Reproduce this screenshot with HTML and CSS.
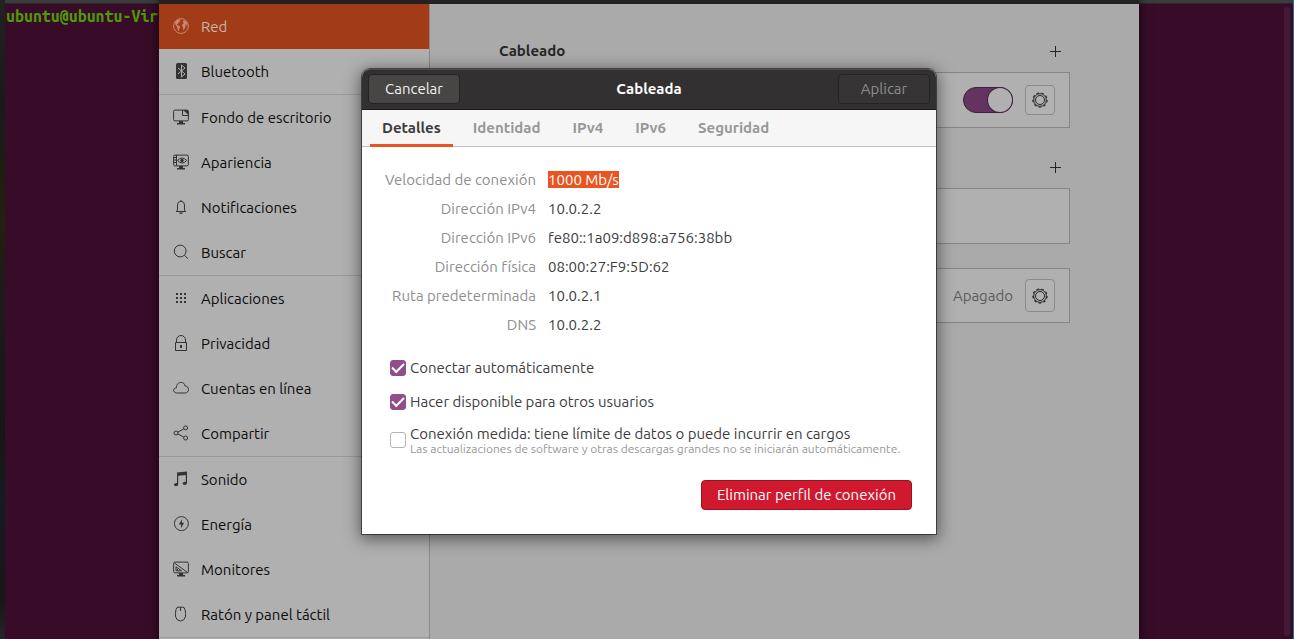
FILE: index.html
```html
<!DOCTYPE html>
<html lang="es">
<head>
<meta charset="utf-8">
<meta name="viewport" content="width=device-width, initial-scale=1">
<title>Configuración de red</title>
<link rel="stylesheet" href="styles.css">
</head>
<body>
<div class="desktop">
  <div class="terminal">
    <div class="terminal-title"></div>
    <div class="terminal-body">
      <span class="prompt">ubuntu@ubuntu-Vir</span>
      <span class="terminal-scroll"></span>
    </div>
  </div>

  <div class="settings">
    <nav class="sidebar" aria-label="Secciones">
      <ul class="group">
        <li><a class="item active" href="#red"><svg class="icon" viewBox="0 0 16 16"><circle cx="8" cy="8" r="7.4" class="line"/><path class="fill" d="M2 4.500C3 2.600 4.600 1.600 6.600 1.200l.8.800-.8 1 .4.800-1.400.8-1 1.400-.8.200 1 1.200 1.700.6.800 1-1 1.400-.4 2-.8.500-.7-2.300-.2-1.800L2.900 7.600zM10.200 2.200l2 .5 1.700 2 .6 2.600-.6.800-.7-1.600-1 .1.500 1.600-.9 2.100-1 1.600-.7-.7-.1-2.300-1-1.200.5-1.700 1.500-.8-.9-.9z"/></svg><span>Red</span></a></li>
        <li><a class="item" href="#bluetooth"><svg class="icon" viewBox="0 0 16 16"><rect x="3" width="11" height="16" rx="1.5" class="fill"/><path class="cut" d="M5 5l7 6-3.5 3V2L12 5l-7 6"/></svg><span>Bluetooth</span></a></li>
      </ul>
      <ul class="group">
        <li><a class="item" href="#fondo"><svg class="icon" viewBox="0 0 16 16"><rect x=".6" y="1.1" width="14.8" height="10.8" rx="1.4" class="line"/><path class="line" d="M9.500 1v5.500H15.500"/><path class="fill" d="M10 1h4q1.500 0 1.500 1.500V6zM6 12h4v2h2v1.400H4V14h2z"/></svg><span>Fondo de escritorio</span></a></li>
        <li><a class="item" href="#apariencia"><svg class="icon" viewBox="0 0 16 16"><rect x=".6" y="1.100" width="14.800" height="10.800" rx="1.400" class="line"/><path class="line" d="M3.500 1v11M1 3.500h2.500M1 6h2.500M1 8.500h2.500M4.500 6.500Q9 1.500 13.800 6.500 9 11.500 4.500 6.500"/><circle cx="9" cy="6.500" r="1.700" class="fill"/><path class="fill" d="M6 12h4v2h2v1.400H4V14h2z"/></svg><span>Apariencia</span></a></li>
        <li><a class="item" href="#notificaciones"><svg class="icon" viewBox="0 0 16 16"><path class="line" d="M3 12.500h10M4 12.200q.5-1 .5-2.200V6q0-3.500 3.500-3.800 3.500.3 3.500 3.800v4q0 1.200.5 2.200M8 1v1.200"/><path class="fill" d="M6.200 13.500h3.600Q9.500 15 8 15t-1.800-1.500"/></svg><span>Notificaciones</span></a></li>
        <li><a class="item" href="#buscar"><svg class="icon" viewBox="0 0 16 16"><circle cx="7.200" cy="7" r="5.900" class="line"/><path class="line" d="M11.400 11.200L15 14.700"/></svg><span>Buscar</span></a></li>
      </ul>
      <ul class="group">
        <li><a class="item" href="#aplicaciones"><svg class="icon" viewBox="0 0 16 16"><path class="fill" d="M3 3h2v2H3zM7 3h2v2H7zM11 3h2v2h-2zM3 7h2v2H3zM7 7h2v2H7zM11 7h2v2h-2zM3 11h2v2H3zM7 11h2v2H7zM11 11h2v2h-2z"/></svg><span>Aplicaciones</span></a></li>
        <li><a class="item" href="#privacidad"><svg class="icon" viewBox="0 0 16 16"><path class="line" d="M2.500 7.500h11v8h-11zM3.500 7.500V5a4.500 4.500 0 0 1 9 0v2.500"/><path class="fill" d="M7 10h2v3H7z"/></svg><span>Privacidad</span></a></li>
        <li><a class="item" href="#cuentas"><svg class="icon" viewBox="0 0 16 16"><path class="line" d="M3.500 13C-.4 12.600-.2 7.900 3.400 7.800 3.300 4 6 2.300 8.200 2.400c2.300 0 3.500 1.600 3.900 3.600 4.500.200 4.400 6.600.300 7z"/></svg><span>Cuentas en línea</span></a></li>
        <li><a class="item" href="#compartir"><svg class="icon" viewBox="0 0 16 16"><circle cx="3" cy="8" r="2" class="line"/><circle cx="12.600" cy="2.900" r="2" class="line"/><circle cx="12.600" cy="13" r="2" class="line"/><path class="line" d="M5 7l5.600-3M5 9l5.600 3"/></svg><span>Compartir</span></a></li>
      </ul>
      <ul class="group">
        <li><a class="item" href="#sonido"><svg class="icon" viewBox="0 0 16 16"><path class="fill" d="M4 1.500L14 .5V12q0 2-2.200 2T9.600 12.300q.3-1.800 3.200-1.500V4L5.200 4.800V13.300q0 2-2.200 2T.9 13.600Q1.300 11.800 4 12z"/></svg><span>Sonido</span></a></li>
        <li><a class="item" href="#energia"><svg class="icon" viewBox="0 0 16 16"><circle cx="8.400" cy="7.600" r="7" class="line"/><path class="fill" d="M9.200 3L5.800 8.500h2.400L7.800 12.500l3.300-5.700H8.800z"/></svg><span>Energía</span></a></li>
        <li><a class="item" href="#monitores"><svg class="icon" viewBox="0 0 16 16"><rect x=".6" y="1.100" width="14.800" height="10.800" rx="1.400" class="line"/><path class="line" d="M1.500 2l13 9.500M3 5.800v4h5.500zM4.500 8v1.500"/><path class="fill" d="M6 12h4v2h2v1.400H4V14h2z"/></svg><span>Monitores</span></a></li>
        <li><a class="item" href="#raton"><svg class="icon" viewBox="0 0 16 16"><path class="line" d="M5 1.200h5q1.500 0 2 2.400 1 4 .4 7.200-.8 4-4.900 4.200-4.100-.2-4.900-4.200-.6-3.200.4-7.200.5-2.400 2-2.400M7.500 1v4"/></svg><span>Ratón y panel táctil</span></a></li>
      </ul>
      <div class="group"></div>
    </nav>

    <main class="main">
      <div class="content">
        <section class="section">
          <header class="section-head"><h2>Cableado</h2><button class="add" type="button" aria-label="Añadir conexión"><svg viewBox="0 0 11 11"><path class="line" d="M5.500 0v11M0 5.500h11"/></svg></button></header>
          <div class="card">
            <input class="switch" type="checkbox" role="switch" aria-label="Cableado activado" checked>
            <button class="gear" type="button" aria-label="Opciones de cableado"><svg viewBox="0 0 16 16"><circle cx="8" cy="8" r="4.500" class="line"/><circle cx="8" cy="8" r="6.300" class="line"/><circle cx="8" cy="8" r="7.100" class="teeth"/></svg></button>
          </div>
        </section>
        <section class="section">
          <header class="section-head end"><button class="add" type="button" aria-label="Añadir VPN"><svg viewBox="0 0 11 11"><path class="line" d="M5.500 0v11M0 5.500h11"/></svg></button></header>
          <div class="card"></div>
        </section>
        <section class="section proxy">
          <div class="card">
            <span class="state">Apagado</span>
            <button class="gear tall" type="button" aria-label="Opciones de proxy"><svg viewBox="0 0 16 16"><circle cx="8" cy="8" r="4.500" class="line"/><circle cx="8" cy="8" r="6.300" class="line"/><circle cx="8" cy="8" r="7.100" class="teeth"/></svg></button>
          </div>
        </section>
      </div>
    </main>

    <div class="dialog-layer">
      <div class="dialog" role="dialog" aria-labelledby="dialog-title">
        <header class="dialog-head">
          <button class="head-button" type="button">Cancelar</button>
          <h1 id="dialog-title">Cableada</h1>
          <button class="head-button apply" type="button" disabled>Aplicar</button>
        </header>
        <div class="tabs" role="tablist">
          <button class="tab selected" type="button" role="tab" aria-selected="true">Detalles</button>
          <button class="tab" type="button" role="tab">Identidad</button>
          <button class="tab" type="button" role="tab">IPv4</button>
          <button class="tab" type="button" role="tab">IPv6</button>
          <button class="tab" type="button" role="tab">Seguridad</button>
        </div>
        <div class="dialog-body">
          <dl class="details">
            <dt>Velocidad de conexión</dt><dd><mark>1000 Mb/s</mark></dd>
            <dt>Dirección IPv4</dt><dd>10.0.2.2</dd>
            <dt>Dirección IPv6</dt><dd>fe80::1a09:d898:a756:38bb</dd>
            <dt>Dirección física</dt><dd>08:00:27:F9:5D:62</dd>
            <dt>Ruta predeterminada</dt><dd>10.0.2.1</dd>
            <dt>DNS</dt><dd>10.0.2.2</dd>
          </dl>
          <div class="options">
            <label class="option"><input type="checkbox" checked><span>Conectar automáticamente</span></label>
            <label class="option"><input type="checkbox" checked><span>Hacer disponible para otros usuarios</span></label>
            <label class="option"><input type="checkbox"><span>Conexión medida: tiene límite de datos o puede incurrir en cargos<small>Las actualizaciones de software y otras descargas grandes no se iniciarán automáticamente.</small></span></label>
          </div>
          <button class="remove" type="button">Eliminar perfil de conexión</button>
        </div>
      </div>
    </div>
  </div>
</div>
</body>
</html>
```

FILE: styles.css
```css
* { box-sizing: border-box; }

body {
  margin: 0;
  font: 15px/20px "Ubuntu", "Noto Sans", "Open Sans", sans-serif;
  color: #3d3d3d;
}

h1, h2, ul, dl, dd { margin: 0; padding: 0; }
ul { list-style: none; }
button { font: inherit; cursor: default; }
svg { display: block; }

.line { fill: none; stroke: currentColor; stroke-width: 1; }
.fill { fill: currentColor; }
.cut { fill: none; stroke: #b0b0b0; stroke-width: 1; }
.teeth { fill: none; stroke: currentColor; stroke-width: 1.2; stroke-dasharray: 2.5 2.45; }

.desktop {
  position: relative;
  height: 100vh;
  overflow: hidden;
  background: linear-gradient(#222, #171a1b 16%, #20220c 35%, #1b1b1b 45%, #141814 68%, #151b22 78%, #151719 94%, #242426);
}

/* Terminal window */
.terminal {
  display: flex;
  flex-direction: column;
  height: 100%;
  margin-left: 5px;
  border-right: 1px solid #2868a8;
}
.terminal-title {
  height: 4px;
  background: #3b3b3b;
  border-bottom: 1px solid #2a2a2a;
}
.terminal-body {
  flex: 1;
  display: flex;
  justify-content: space-between;
  padding: 3px 3px 3px 1px;
  background: #380c28;
}
.prompt {
  font: bold 16px/18px "Ubuntu Mono", "DejaVu Sans Mono", monospace;
  color: #4e9a06;
}
.terminal-scroll {
  width: 6px;
  border-radius: 3px;
  background: #421a34;
}

/* Settings window */
.settings {
  position: absolute;
  inset: 0 155px 0 159px;
  display: flex;
  border-top: 4px solid #222;
  background: #aaa;
  box-shadow: 0 0 10px 1px rgba(0, 0, 0, .6);
}

.sidebar {
  width: 271px;
  overflow: hidden;
  background: #b0b0b0;
  border-right: 1px solid #8a8a8a;
}
.group + .group { border-top: 1px solid #999; }
.item {
  display: flex;
  align-items: center;
  gap: 12px;
  height: 45px;
  padding-left: 14px;
  color: #333;
  text-decoration: none;
}
.item span { color: #0c0c0c; }
.item.active { background: #a23b17; color: #c58a75; }
.item.active span { color: #c7b5ae; }
.icon { width: 16px; height: 16px; margin-bottom: 1px; }

.main {
  flex: 1;
  padding: 26px 69px 0;
}
.content { max-width: 720px; margin: 0 auto; }
.section { margin-bottom: 18px; }
.section.proxy { margin-top: 24px; }
.section-head {
  display: flex;
  align-items: center;
  justify-content: space-between;
  height: 42px;
  padding-right: 9px;
}
.section-head.end { justify-content: flex-end; }
.section-head h2 { font-size: 15px; font-weight: 700; color: #262626; }
.add {
  width: 11px;
  height: 11px;
  padding: 0;
  border: 0;
  background: none;
  color: #262626;
}
.card {
  display: flex;
  align-items: center;
  justify-content: flex-end;
  gap: 12px;
  height: 56px;
  padding-right: 14px;
  border: 1px solid #858585;
  background: #b0b0b0;
}
.proxy .card { height: 55px; }
.state { color: #5b5b5b; }
.gear {
  display: grid;
  place-items: center;
  width: 30px;
  height: 30px;
  padding: 0;
  border: 1px solid #8a8a8a;
  border-radius: 4px;
  background: #b2b2b2;
  color: #2a2a2a;
}
.gear.tall { height: 33px; }
.gear svg { width: 16px; height: 16px; }
.switch {
  appearance: none;
  display: flex;
  justify-content: flex-end;
  width: 50px;
  height: 26px;
  margin: 0;
  border: 1px solid #40203c;
  border-radius: 13px;
  background: #653360;
}
.switch::before {
  content: "";
  width: 24px;
  border-radius: 50%;
  background: #b0b0b0;
  box-shadow: 0 0 0 1px #40203c;
}

/* Connection dialog */
.dialog-layer {
  position: absolute;
  inset: 0;
  display: flex;
  justify-content: center;
  align-items: flex-start;
  padding-top: 65px;
}
.dialog {
  width: 574px;
  border-radius: 8px 8px 0 0;
  background: #fff;
  box-shadow: 0 0 0 1px rgba(0, 0, 0, .5), 0 3px 16px 2px rgba(0, 0, 0, .5);
}
.dialog-head {
  display: grid;
  grid-template-columns: 1fr auto 1fr;
  align-items: center;
  height: 41px;
  padding: 0 6px 1px;
  border-top: 1px solid #4a4949;
  border-bottom: 1px solid #1c1b1b;
  border-radius: 8px 8px 0 0;
  background: #323030;
}
.dialog-head h1 { font-size: 15px; font-weight: 700; color: #fff; }
.head-button {
  width: 92px;
  height: 30px;
  padding: 0;
  border: 1px solid #252424;
  border-radius: 4px;
  background: #484644;
  color: #f2f2f2;
}
.head-button.apply {
  justify-self: end;
  background: #363434;
  color: #8e8d8d;
}
.tabs {
  display: flex;
  gap: 8px;
  height: 37px;
  padding: 0 8px;
  border-bottom: 1px solid #c0c0c0;
  background: #f6f6f6;
}
.tab {
  height: 37px;
  padding: 2px 12px 0;
  border: 0;
  border-bottom: 3px solid transparent;
  background: none;
  font-weight: 700;
  color: #989898;
}
.tab.selected { border-color: #e95420; color: #3d3d3d; }

.dialog-body {
  display: flex;
  flex-direction: column;
  padding: 18px 24px 24px;
}
.details {
  display: grid;
  grid-template-columns: 150px 1fr;
  grid-auto-rows: 29px;
  align-items: center;
  column-gap: 12px;
}
.details dt {
  justify-self: end;
  white-space: nowrap;
  color: #8e8e8e;
}
.details mark {
  display: inline-block;
  line-height: 17px;
  background: #e95420;
  color: #fff;
}
.options {
  display: grid;
  gap: 12px;
  padding: 18px 0 25px 4px;
}
.option {
  display: flex;
  align-items: center;
  gap: 4px;
  min-height: 22px;
  line-height: 18px;
}
.option small {
  display: block;
  font-size: 12px;
  line-height: 12px;
  color: #989898;
}
.option input {
  appearance: none;
  flex: none;
  width: 16px;
  height: 16px;
  margin: 0;
  border: 1px solid #b4b4b4;
  border-radius: 3px;
  background: #fff;
}
.option input:checked {
  display: grid;
  place-items: center;
  border-color: #924d8b;
  background: #924d8b;
}
.option input:checked::before {
  content: "";
  width: 10px;
  height: 5px;
  margin-bottom: 3px;
  border: solid #fff;
  border-width: 0 0 2px 2px;
  rotate: -45deg;
}
.remove {
  align-self: flex-end;
  height: 30px;
  padding: 0 15px;
  border: 1px solid #96141f;
  border-radius: 4px;
  background: #d0182e;
  color: #fff;
}
```
